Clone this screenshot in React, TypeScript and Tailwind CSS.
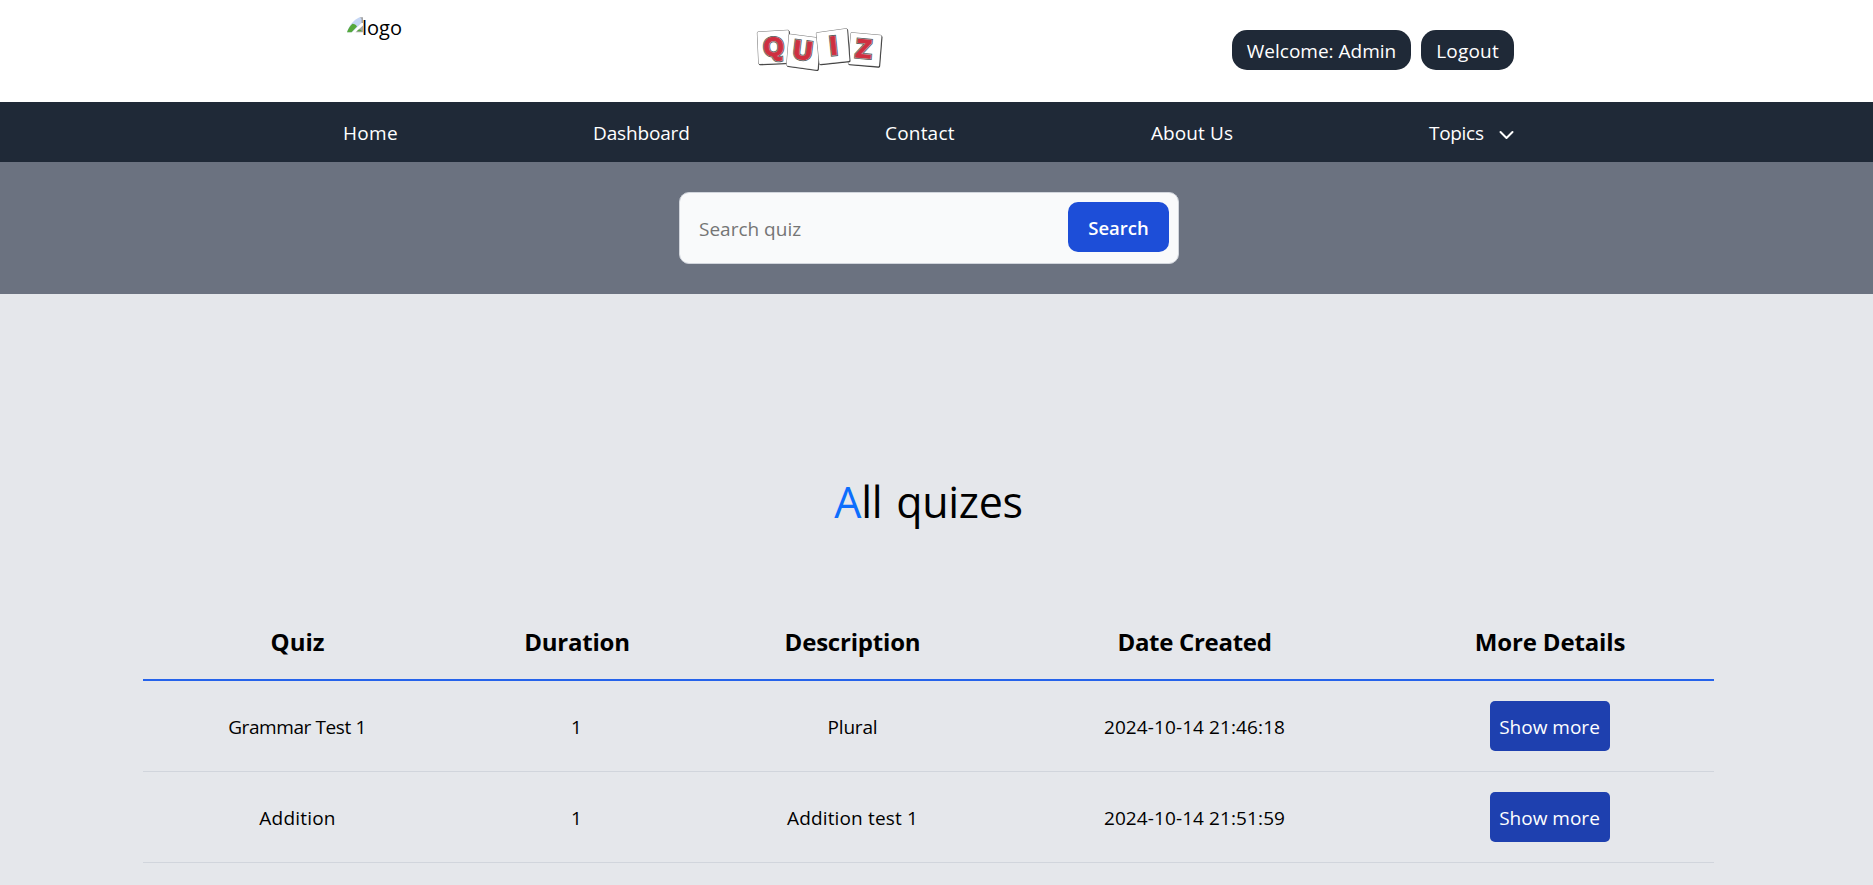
type Tile = { letter: string; points: string; x: number; y: number; rotate: number };

const tiles: Tile[] = [
  { letter: 'Q', points: '55,39 143,34 147,125 59,129', x: 101, y: 80, rotate: -3 },
  { letter: 'U', points: '150,46 237,57 230,146 143,134', x: 189, y: 91, rotate: 7 },
  { letter: 'Z', points: '336,41 421,49 414,136 328,129', x: 371, y: 86, rotate: 5 },
  { letter: 'I', points: '232,41 318,29 325,120 241,129', x: 280, y: 77, rotate: -6 },
];

function QuizLogo() {
  return (
    <svg width="160" height="60" viewBox="0 0 480 180" aria-label="Quiz">
      {tiles.map((t) => (
        <g key={t.letter}>
          <polygon points={t.points} transform="translate(2 2.5)" fill="#333" stroke="#333" strokeWidth="9" strokeLinejoin="round" />
          <polygon points={t.points} fill="#fff" stroke="#777" strokeWidth="9" strokeLinejoin="round" />
          <polygon points={t.points} fill="#fff" stroke="#fff" strokeWidth="6" strokeLinejoin="round" />
          <g
            transform={`translate(${t.x} ${t.y}) rotate(${t.rotate})`}
            className="font-['Liberation_Sans',sans-serif] text-[78px] font-bold"
            textAnchor="middle"
            strokeLinejoin="miter"
          >
            <text y="27" fill="#5a5a5a" stroke="#5a5a5a" strokeWidth="10">{t.letter}</text>
            <text y="27" fill="#bdb4b4" stroke="#bdb4b4" strokeWidth="5.5" aria-hidden="true">{t.letter}</text>
            <text y="27" fill="#cf2f40" stroke="#cf2f40" strokeWidth="3" aria-hidden="true">{t.letter}</text>
          </g>
        </g>
      ))}
    </svg>
  );
}

function BrokenImage() {
  return (
    <svg width="16" height="16" viewBox="0 0 16 16">
      <path d="M0 15.3C2 8.500 6.500 3 12.500 0.300L15 0.500V5.500L5 15.300Z" fill="#c5d6f4" />
      <path d="M0 15.300C1.200 11.800 3 8.800 5.500 6.800C7.500 6.800 8.800 8 10 9.400L4.500 15.300Z" fill="#55a83c" />
      <path d="M13 0.300H16V6L14.500 6V2Z" fill="#a5a5a5" />
      <path d="M8.500 15.300L16 8.500V15.300Z" fill="#a8a8a8" />
      <path d="M10 14.300C11.500 12 13.500 12 15 14.300Z" fill="#55a83c" />
    </svg>
  );
}

const quizzes = [
  { name: 'Grammar Test 1', nameCls: 'pt-[2px] pb-0 tracking-[-0.4px]', duration: '1', description: 'Plural', descCls: 'pt-[2px] pb-0 tracking-[-0.2px]', created: '2024-10-14 21:46:18' },
  { name: 'Addition', nameCls: 'pt-[2px] pb-0 pl-px tracking-[0.2px]', duration: '1', description: 'Addition test 1', descCls: 'pt-[2px] pb-0 tracking-[0.15px]', created: '2024-10-14 21:51:59' },
];

export default function App() {
  return (
    <div className="flex h-[885px] flex-col overflow-hidden bg-gray-200 font-['Open_Sans','Noto_Sans',sans-serif] text-[19px] leading-[30px] text-black">
      <header className="h-[102px] bg-white">
        <div className="ml-[342px] flex w-[1172px] items-start justify-between">
          <a className="flex w-[398px] items-start pt-[13px] pl-[5px]">
            <span className="pt-1"><BrokenImage /></span>
            <span className="-ml-px text-[20px]">logo</span>
          </a>
          <div className="mt-5 flex-1"><QuizLogo /></div>
          <div className="mt-[30px] flex gap-[10px] text-white">
            <span className="flex h-10 w-[179px] items-center justify-center rounded-[15px] bg-[#1f2937] pt-px">Welcome: Admin</span>
            <button className="flex h-10 w-[93px] items-center justify-center rounded-[15px] bg-[#1f2937] pt-px tracking-[0.2px]">Logout</button>
          </div>
        </div>
      </header>

      <nav className="h-[60px] bg-[#1f2937] text-white">
        <div className="ml-[343px] grid h-full w-[1171px] grid-cols-[250px_292px_266px_278px_85px] items-center pt-px">
          <a className="tracking-[0.3px]">Home</a>
          <a className="tracking-[-0.15px]">Dashboard</a>
          <a className="tracking-[0.2px]">Contact</a>
          <a className="tracking-[0.1px]">About Us</a>
          <a className="flex items-center justify-between tracking-[-0.3px]">
            Topics
            <svg className="mt-1" width="15" height="10" viewBox="0 0 15 10" fill="none" stroke="#fff" strokeWidth="2">
              <path d="M1.500 2L7.500 8L13.500 2" strokeLinecap="round" strokeLinejoin="round" />
            </svg>
          </a>
        </div>
      </nav>

      <section className="h-[132px] bg-[#6b7280] pt-[30px]">
        <form className="ml-[679px] flex h-[72px] w-[500px] items-start rounded-[10px] border border-gray-300 bg-gray-50 pr-[9px] pl-[19px]">
          <input className="h-[70px] min-w-0 flex-1 bg-transparent pt-px outline-none placeholder:text-[#757575]" placeholder="Search quiz" />
          <button type="button" className="mt-[9px] h-[50px] w-[101px] rounded-[10px] bg-[#1d4ed8] pt-[2px] text-[18.5px] font-semibold text-white">
            Search
          </button>
        </form>
      </section>

      <main className="w-[1857px]">
        <h1 className="mt-[180px] text-center text-[43px] leading-[56px] tracking-[-0.3px] [word-spacing:3px]">
          <span className="text-[#0d6efd]">A</span>ll quizes
        </h1>
        <table className="mt-[72px] ml-[143px] w-[1571px] table-fixed border-collapse text-center">
          <colgroup>
            <col className="w-[308px]" />
            <col className="w-[252px]" />
            <col className="w-[299px]" />
            <col className="w-[385px]" />
            <col className="w-[327px]" />
          </colgroup>
          <thead>
            <tr className="h-[78px] border-b-2 border-[#2563eb] text-[24px]">
              <th className="pt-[3px] pr-0 pb-0 pl-px font-bold">Quiz</th>
              <th className="p-0 pt-[3px] font-bold tracking-[-0.2px]">Duration</th>
              <th className="p-0 pt-[3px] font-bold tracking-[-0.2px]">Description</th>
              <th className="p-0 pt-[3px] font-bold tracking-[-0.3px]">Date Created</th>
              <th className="p-0 pt-[3px] pr-px font-bold tracking-[-0.15px]">More Details</th>
            </tr>
          </thead>
          <tbody>
            {quizzes.map((q) => (
              <tr key={q.name} className="h-[91px] border-b border-gray-300">
                <td className={q.nameCls}>{q.name}</td>
                <td className="pt-[2px] pr-px pb-0 pl-0">{q.duration}</td>
                <td className={q.descCls}>{q.description}</td>
                <td className="pt-[2px] pb-0 tracking-[0.1px]">{q.created}</td>
                <td className="p-0 pr-[2px]">
                  <button className="h-[50px] w-[120px] rounded-[5px] bg-[#1e40af] pt-[2px] align-middle text-white">Show more</button>
                </td>
              </tr>
            ))}
          </tbody>
        </table>
      </main>
    </div>
  );
}
